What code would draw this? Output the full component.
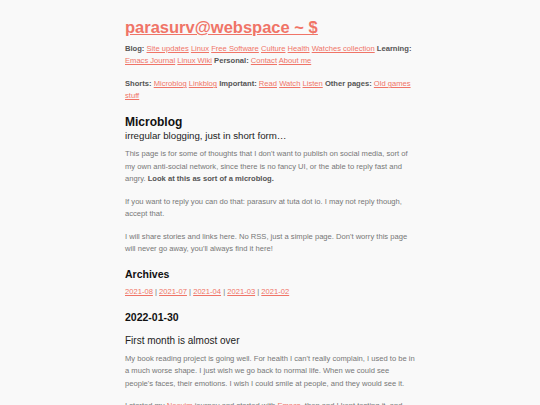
import React from "react";

const A = ({ children }) => (
  <a href="#" className="text-[#f07467] underline">
    {children}
  </a>
);

const Nav = () => (
  <>
    <p className="mt-[4px] text-[7.6px] leading-[12px] text-[#666]">
      <b className="text-[#555]">Blog:</b> <A>Site updates</A> <A>Linux</A> <A>Free Software</A>{" "}
      <A>Culture</A> <A>Health</A> <A>Watches collection</A> <b className="text-[#555]">Learning:</b>{" "}
      <A>Emacs Journal</A> <A>Linux Wiki</A> <b className="text-[#555]">Personal:</b> <A>Contact</A>{" "}
      <A>About me</A>
    </p>
    <p className="mt-[11px] text-[7.6px] leading-[12px] text-[#666]">
      <b className="text-[#555]">Shorts:</b> <A>Microblog</A> <A>Linkblog</A>{" "}
      <b className="text-[#555]">Important:</b> <A>Read</A> <A>Watch</A> <A>Listen</A>{" "}
      <b className="text-[#555]">Other pages:</b> <A>Old games stuff</A>
    </p>
  </>
);

export default function App() {
  return (
    <div className="min-h-[405px] bg-[#f9f9f9] font-['Liberation_Sans',Arial,sans-serif]">
      <div className="mx-auto w-[290px] pt-[15px]">
        <h1 className="text-[16.5px] font-bold leading-[24px] text-[#f07467] underline">
          <a href="#">parasurv@webspace ~ $</a>
        </h1>
        <Nav />

        <h2 className="mt-[13px] text-[12px] font-bold leading-[14px] text-[#111]">Microblog</h2>
        <h3 className="text-[9.7px] leading-[13px] text-[#222]">irregular blogging, just in short form…</h3>
        <div className="mt-[6px] space-y-[10px] text-[7.6px] leading-[12.5px] text-[#777]">
          <p>
            This page is for some of thoughts that I don't want to publish on social media, sort of my
            own anti-social network, since there is no fancy UI, or the able to reply fast and angry.{" "}
            <b className="text-[#555]">Look at this as sort of a microblog.</b>
          </p>
          <p>
            If you want to reply you can do that: parasurv at tuta dot io. I may not reply though, accept
            that.
          </p>
          <p>
            I will share stories and links here. No RSS, just a simple page. Don't worry this page will
            never go away, you'll always find it here!
          </p>
        </div>

        <h2 className="mt-[10px] text-[10.5px] font-bold leading-[16px] text-[#111]">Archives</h2>
        <p className="mt-[4px] text-[7.6px] leading-[12px] text-[#777]">
          <A>2021-08</A> | <A>2021-07</A> | <A>2021-04</A> | <A>2021-03</A> | <A>2021-02</A>
        </p>

        <h2 className="mt-[11px] text-[10.5px] font-bold leading-[16px] text-[#111]">2022-01-30</h2>
        <h3 className="mt-[9px] text-[10px] leading-[14px] text-[#222]">First month is almost over</h3>
        <div className="mt-[5px] space-y-[10px] text-[7.6px] leading-[12.5px] text-[#777]">
          <p>
            My book reading project is going well. For health I can't really complain, I used to be in a
            much worse shape. I just wish we go back to normal life. When we could see people's faces,
            their emotions. I wish I could smile at people, and they would see it.
          </p>
          <p>
            I started my <A>Neovim</A> journey and started with <A>Emacs</A>, then and I kept testing it,
            and now I use it for everything.
          </p>
        </div>
      </div>
    </div>
  );
}
